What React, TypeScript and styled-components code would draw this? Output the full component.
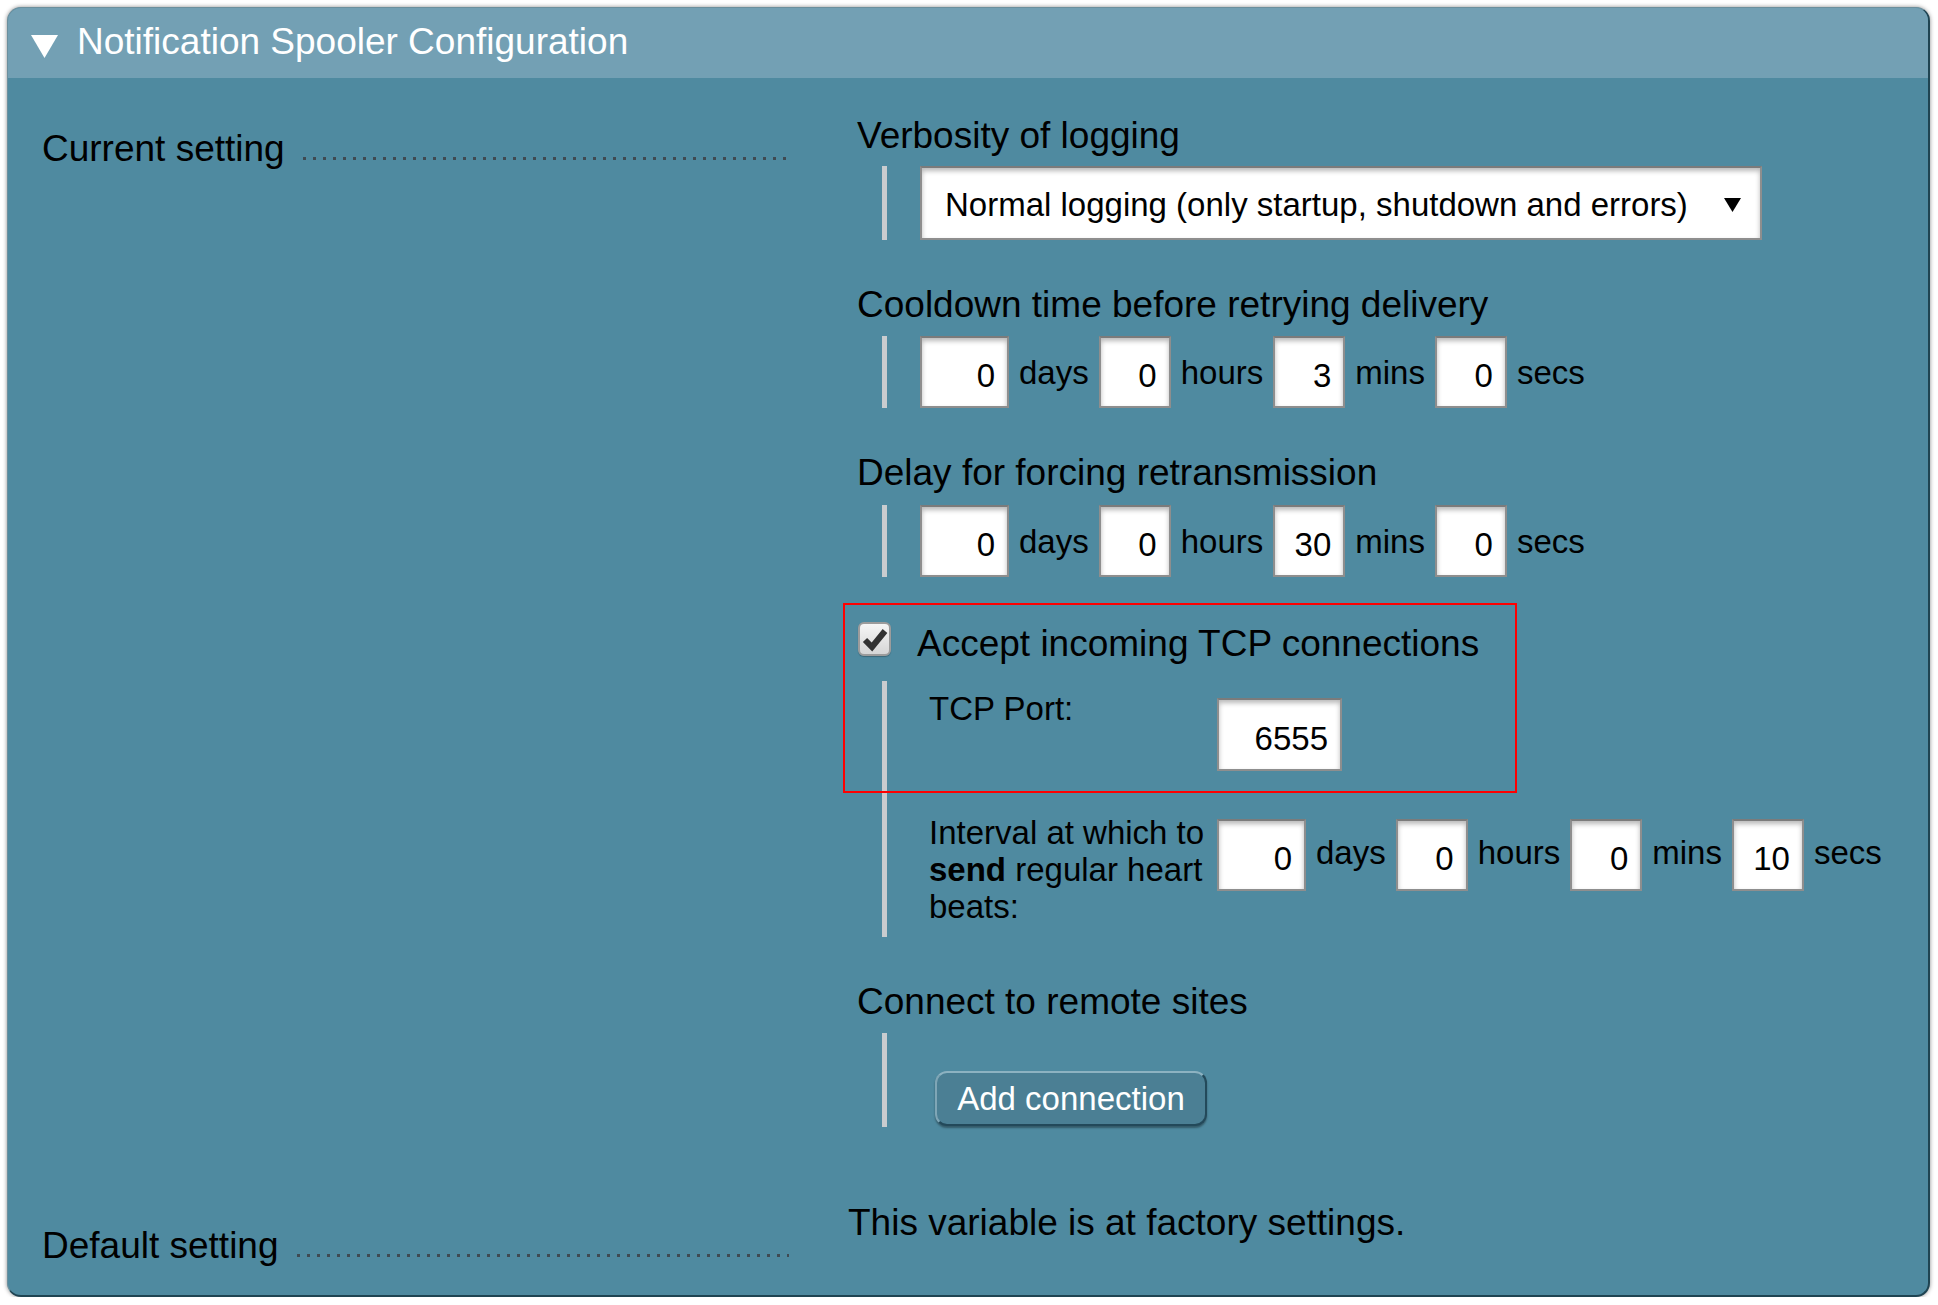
import React from "react";
import styled, { createGlobalStyle } from "styled-components";

const GlobalStyle = createGlobalStyle`
  html, body { margin: 0; padding: 0; background: #ffffff; }
  body { font-family: "Liberation Sans", Arial, Helvetica, sans-serif; color: #000; }
  * { box-sizing: border-box; }
`;

const Panel = styled.section`
  margin: 7px 0 0 7px;
  width: 1923px;
  height: 1290px;
  border: 1px solid #6b8f9d;
  border-right: 2px solid #1f4452;
  border-bottom: 2px solid #1f4452;
  border-radius: 14px;
  box-shadow: 0 0 4px rgba(0, 0, 0, 0.45);
  background: #4f8aa0;
  overflow: hidden;
  display: flex;
  flex-direction: column;
`;

const Header = styled.header`
  flex: none;
  height: 70px;
  background: #73a0b4;
  display: flex;
  align-items: center;
  padding: 0 0 0 23px;
  color: #ffffff;
  font-size: 37px;
  line-height: 44px;
`;

const HeaderTitle = styled.span`
  margin-top: -2px;
`;

const HeaderArrow = styled.svg`
  flex: none;
  width: 27px;
  height: 23px;
  margin: 7px 19px 0 0;
`;

const Body = styled.div`
  flex: 1;
  display: grid;
  grid-template-columns: 840px 1fr;
  grid-template-rows: auto 1fr;
`;

const LegendCell = styled.div<{ $top: number }>`
  display: flex;
  align-items: flex-start;
  padding: ${(p) => p.$top}px 59px 0 34px;
`;

const LegendLabel = styled.span`
  font-size: 37px;
  line-height: 44px;
  white-space: nowrap;
`;

const Leader = styled.span`
  flex: 1;
  height: 3px;
  margin: 30px 0 0 18px;
  background-image: linear-gradient(to right, #3f4a52 0, #3f4a52 3px, transparent 3px);
  background-size: 10px 3px;
  background-repeat: repeat-x;
`;

const ValueCell = styled.div`
  padding: 36px 0 0 9px;
`;

const Section = styled.div<{ $gap: number }>`
  position: relative;
  margin-top: ${(p) => p.$gap}px;
`;

const Heading = styled.div`
  font-size: 37px;
  line-height: 44px;
  white-space: nowrap;
`;

const Indent = styled.div<{ $gap: number }>`
  display: flex;
  margin: ${(p) => p.$gap}px 0 0 25px;
`;

const Bar = styled.div`
  flex: none;
  width: 5px;
  background: #c9cccf;
`;

const IndentContent = styled.div<{ $pt?: number; $pb?: number }>`
  flex: 1;
  padding: ${(p) => p.$pt ?? 0}px 0 ${(p) => p.$pb ?? 0}px 33px;
`;

const SelectBox = styled.div`
  width: 842px;
  height: 74px;
  background: #ffffff;
  border: 2px solid #8e8e8e;
  border-top-color: #7b7b7b;
  box-shadow: inset 0 3px 5px rgba(0, 0, 0, 0.28);
  display: flex;
  align-items: center;
  justify-content: space-between;
  padding: 4px 19px 0 23px;
  font-size: 33px;
  line-height: 38px;
  white-space: nowrap;
`;

const SelectArrow = styled.svg`
  width: 17px;
  height: 14px;
  flex: none;
`;

const TimeRow = styled.div<{ $top?: number }>`
  display: flex;
  align-items: flex-start;
  margin-top: ${(p) => p.$top ?? 0}px;
`;

const NumInput = styled.input<{ $w: number; $h?: number }>`
  flex: none;
  width: ${(p) => p.$w}px;
  height: ${(p) => p.$h ?? 72}px;
  margin: 0;
  background: #ffffff;
  border: 2px solid #8e8e8e;
  border-top-color: #7b7b7b;
  border-radius: 0;
  box-shadow: inset 0 3px 5px rgba(0, 0, 0, 0.28);
  padding: 8px 12px 0 4px;
  font-family: "Liberation Sans", Arial, sans-serif;
  font-size: 33px;
  color: #000;
  text-align: right;
  outline: none;
`;

const Unit = styled.span<{ $top: number }>`
  flex: none;
  margin-top: ${(p) => p.$top}px;
  padding: 0 10px;
  font-size: 33px;
  line-height: 37px;
  white-space: nowrap;
`;

const CheckRow = styled.label`
  display: flex;
  align-items: flex-start;
`;

const CheckBox = styled.span`
  flex: none;
  width: 33px;
  height: 34px;
  margin: 0 26px 0 1px;
  border: 2px solid #9c9c9c;
  border-radius: 6px;
  background: linear-gradient(#f6f6f6, #d6d6d6);
  box-shadow: 0 1px 1px rgba(0, 0, 0, 0.25);
  display: flex;
  align-items: center;
  justify-content: center;
`;

const CheckLabel = styled.span`
  font-size: 37px;
  line-height: 44px;
  white-space: nowrap;
`;

const Highlight = styled.div`
  position: absolute;
  top: -19px;
  left: -14px;
  width: 674px;
  height: 190px;
  border: 2px solid #ff0000;
  pointer-events: none;
`;

const FormGrid = styled.div`
  display: grid;
  grid-template-columns: 297px auto;
  row-gap: 43px;
  align-items: start;
`;

const FormLabel = styled.div`
  padding: 0 11px 0 9px;
  font-size: 33px;
  line-height: 37px;
  b { font-weight: bold; }
`;

const PortInput = styled(NumInput)`
  margin-top: 8px;
`;

const AddButton = styled.button`
  display: block;
  width: 272px;
  height: 55px;
  margin: 0 0 0 15px;
  padding: 0;
  background: #4b7f94;
  border: 2px solid;
  border-color: #8db2c1 #23495a #23495a #7fa6b6;
  border-radius: 12px;
  box-shadow: 0 2px 2px rgba(0, 0, 0, 0.35);
  color: #ffffff;
  font-family: "Liberation Sans", Arial, sans-serif;
  font-size: 33px;
  line-height: 38px;
  cursor: pointer;
`;

const FactoryCell = styled.div`
  padding-top: 74px;
  font-size: 37px;
  line-height: 44px;
  white-space: nowrap;
`;

type TimeVals = { d: string; h: string; m: string; s: string };

function AgeInput({ v, unitTop, top }: { v: TimeVals; unitTop: number; top?: number }) {
  return (
    <TimeRow $top={top}>
      <NumInput $w={89} defaultValue={v.d} />
      <Unit $top={unitTop}>days</Unit>
      <NumInput $w={72} defaultValue={v.h} />
      <Unit $top={unitTop}>hours</Unit>
      <NumInput $w={72} defaultValue={v.m} />
      <Unit $top={unitTop}>mins</Unit>
      <NumInput $w={72} defaultValue={v.s} />
      <Unit $top={unitTop}>secs</Unit>
    </TimeRow>
  );
}

export default function App() {
  return (
    <>
      <GlobalStyle />
      <Panel>
        <Header>
          <HeaderArrow viewBox="0 0 27 23">
            <polygon points="0,0 27,0 13.5,23" fill="#ffffff" />
          </HeaderArrow>
          <HeaderTitle>Notification Spooler Configuration</HeaderTitle>
        </Header>
        <Body>
          <LegendCell $top={49}>
            <LegendLabel>Current setting</LegendLabel>
            <Leader />
          </LegendCell>
          <ValueCell>
            <Section $gap={0}>
              <Heading>Verbosity of logging</Heading>
              <Indent $gap={8}>
                <Bar />
                <IndentContent>
                  <SelectBox>
                    <span>Normal logging (only startup, shutdown and errors)</span>
                    <SelectArrow viewBox="0 0 17 14">
                      <polygon points="0,0 17,0 8.5,14" fill="#000000" />
                    </SelectArrow>
                  </SelectBox>
                </IndentContent>
              </Indent>
            </Section>

            <Section $gap={43}>
              <Heading>Cooldown time before retrying delivery</Heading>
              <Indent $gap={9}>
                <Bar />
                <IndentContent>
                  <AgeInput v={{ d: "0", h: "0", m: "3", s: "0" }} unitTop={18} />
                </IndentContent>
              </Indent>
            </Section>

            <Section $gap={43}>
              <Heading>Delay for forcing retransmission</Heading>
              <Indent $gap={10}>
                <Bar />
                <IndentContent>
                  <AgeInput v={{ d: "0", h: "0", m: "30", s: "0" }} unitTop={18} />
                </IndentContent>
              </Indent>
            </Section>

            <Section $gap={45}>
              <Highlight />
              <CheckRow>
                <CheckBox>
                  <svg width="27" height="25" viewBox="0 0 27 25">
                    <polyline
                      points="4,13 11,20 24,4"
                      fill="none"
                      stroke="#333333"
                      strokeWidth="6"
                      strokeLinejoin="miter"
                    />
                  </svg>
                </CheckBox>
                <CheckLabel>Accept incoming TCP connections</CheckLabel>
              </CheckRow>
              <Indent $gap={15}>
                <Bar />
                <IndentContent $pt={9} $pb={12}>
                  <FormGrid>
                    <FormLabel>TCP Port:</FormLabel>
                    <div>
                      <PortInput $w={125} $h={73} defaultValue="6555" />
                    </div>
                    <FormLabel>
                      Interval at which to <b>send</b> regular heart beats:
                    </FormLabel>
                    <AgeInput v={{ d: "0", h: "0", m: "0", s: "10" }} unitTop={15} top={5} />
                  </FormGrid>
                </IndentContent>
              </Indent>
            </Section>

            <Section $gap={43}>
              <Heading>Connect to remote sites</Heading>
              <Indent $gap={9}>
                <Bar />
                <IndentContent $pt={38} $pb={1}>
                  <AddButton type="button">Add connection</AddButton>
                </IndentContent>
              </Indent>
            </Section>
          </ValueCell>

          <LegendCell $top={97}>
            <LegendLabel>Default setting</LegendLabel>
            <Leader />
          </LegendCell>
          <FactoryCell>This variable is at factory settings.</FactoryCell>
        </Body>
      </Panel>
    </>
  );
}
